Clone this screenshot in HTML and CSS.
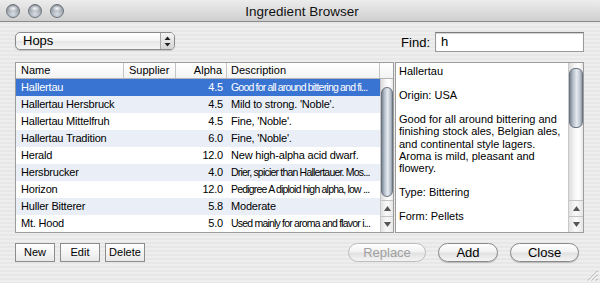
FILE: index.html
```html
<!DOCTYPE html>
<html>
<head>
<meta charset="utf-8">
<title>Ingredient Browser</title>
<link rel="stylesheet" href="styles.css">
</head>
<body>
<div class="window">
  <div class="titlebar">
    <div class="lights">
      <span class="light"></span><span class="light"></span><span class="light"></span>
    </div>
    <div class="title">Ingredient Browser</div>
  </div>
  <div class="content">
    <div class="toprow">
      <div class="popup">
        <span class="popup-label">Hops</span>
        <span class="stepper">
          <svg width="7" height="11" viewBox="0 0 7 11"><path d="M3.5 0.5 L6.5 4 L0.5 4 Z" fill="#222"/><path d="M0.5 7 L6.5 7 L3.5 10.5 Z" fill="#222"/></svg>
        </span>
      </div>
      <div class="find">
        <span class="find-label">Find:</span>
        <div class="input">h</div>
      </div>
    </div>

    <div class="main">
      <div class="table">
        <div class="thead">
          <div class="th c-name">Name</div>
          <div class="th c-sup">Supplier</div>
          <div class="th c-alpha">Alpha</div>
          <div class="th c-desc">Description</div>
          <div class="th c-corner"></div>
        </div>
        <div class="tbody">
          <div class="rows">
            <div class="row sel"><span class="c-name">Hallertau</span><span class="c-sup"></span><span class="c-alpha">4.5</span><span class="c-desc tight">Good for all around bittering and fi...</span></div>
            <div class="row alt"><span class="c-name">Hallertau Hersbruck</span><span class="c-sup"></span><span class="c-alpha">4.5</span><span class="c-desc">Mild to strong. 'Noble'.</span></div>
            <div class="row"><span class="c-name">Hallertau Mittelfruh</span><span class="c-sup"></span><span class="c-alpha">4.5</span><span class="c-desc">Fine, 'Noble'.</span></div>
            <div class="row alt"><span class="c-name">Hallertau Tradition</span><span class="c-sup"></span><span class="c-alpha">6.0</span><span class="c-desc">Fine, 'Noble'.</span></div>
            <div class="row"><span class="c-name">Herald</span><span class="c-sup"></span><span class="c-alpha">12.0</span><span class="c-desc">New high-alpha acid dwarf.</span></div>
            <div class="row alt"><span class="c-name">Hersbrucker</span><span class="c-sup"></span><span class="c-alpha">4.0</span><span class="c-desc tight">Drier, spicier than Hallertauer. Mos...</span></div>
            <div class="row"><span class="c-name">Horizon</span><span class="c-sup"></span><span class="c-alpha">12.0</span><span class="c-desc tight">Pedigree A diploid high alpha, low ...</span></div>
            <div class="row alt"><span class="c-name">Huller Bitterer</span><span class="c-sup"></span><span class="c-alpha">5.8</span><span class="c-desc">Moderate</span></div>
            <div class="row"><span class="c-name">Mt. Hood</span><span class="c-sup"></span><span class="c-alpha">5.0</span><span class="c-desc tight">Used mainly for aroma and flavor i...</span></div>
          </div>
          <div class="vscroll">
            <div class="track"><div class="thumb thumb-table"></div></div>
            <div class="arrow up"><svg width="7" height="5" viewBox="0 0 7 5"><path d="M3.5 0 L7 5 L0 5 Z" fill="#555"/></svg></div>
            <div class="arrow down"><svg width="7" height="5" viewBox="0 0 7 5"><path d="M0 0 L7 0 L3.5 5 Z" fill="#555"/></svg></div>
          </div>
        </div>
      </div>

      <div class="pane">
        <div class="pane-text">
          <p>Hallertau</p>
          <p>Origin: USA</p>
          <p>Good for all around bittering and finishing stock ales, Belgian ales, and continental style lagers. Aroma is mild, pleasant and flowery.</p>
          <p>Type: Bittering</p>
          <p>Form: Pellets</p>
        </div>
        <div class="vscroll">
          <div class="track"><div class="thumb thumb-pane"></div></div>
          <div class="arrow up"><svg width="7" height="5" viewBox="0 0 7 5"><path d="M3.5 0 L7 5 L0 5 Z" fill="#555"/></svg></div>
          <div class="arrow down"><svg width="7" height="5" viewBox="0 0 7 5"><path d="M0 0 L7 0 L3.5 5 Z" fill="#555"/></svg></div>
        </div>
      </div>
    </div>

    <div class="bottom">
      <div class="left-buttons">
        <div class="sqbtn">New</div>
        <div class="sqbtn">Edit</div>
        <div class="sqbtn">Delete</div>
      </div>
      <div class="right-buttons">
        <div class="pill disabled w-replace">Replace</div>
        <div class="pill w-add">Add</div>
        <div class="pill w-close">Close</div>
      </div>
    </div>
  </div>
  <svg class="grip" width="11" height="11" viewBox="0 0 11 11">
    <path d="M10.5 1 L1 10.5 M10.5 5 L5 10.5 M10.5 9 L9 10.5" stroke="#9a9a9a" stroke-width="1"/>
    <path d="M10.5 2 L2 10.5 M10.5 6 L6 10.5" stroke="#fff" stroke-width="1"/>
  </svg>
</div>
</body>
</html>
```

FILE: styles.css
```css
* { box-sizing: border-box; }
html, body { margin: 0; padding: 0; }
body {
  width: 600px;
  height: 283px;
  overflow: hidden;
  font-family: "Liberation Sans", Arial, sans-serif;
  color: #000;
  background: #ececec;
}
.window {
  position: relative;
  width: 600px;
  height: 283px;
  background: repeating-linear-gradient(to bottom, #eeeeee 0, #eeeeee 2px, #e7e7e7 2px, #e7e7e7 4px);
}
.titlebar {
  height: 22px;
  display: flex;
  align-items: center;
  position: relative;
  background: linear-gradient(to bottom, #ececec 0%, #dedede 50%, #cfcfcf 100%);
  border-bottom: 1px solid #8a8a8a;
  border-radius: 5px 5px 0 0;
}
.lights {
  display: flex;
  gap: 8px;
  padding-left: 6px;
}
.light {
  width: 14px;
  height: 14px;
  border-radius: 50%;
  border: 1px solid #6d737b;
  background:
    radial-gradient(ellipse 5px 3px at 50% 28%, rgba(255,255,255,0.95), rgba(255,255,255,0) 100%),
    radial-gradient(circle at 50% 75%, #d9dee4 0%, #a2a9b2 55%, #7f8790 100%);
}
.title {
  flex: 1;
  text-align: center;
  font-size: 13.5px;
  color: #111;
  margin-right: 60px;
  margin-top: 1px;
}
.content {
  padding: 10px 16px 0 15px;
}
.toprow {
  display: flex;
  justify-content: space-between;
  align-items: flex-start;
  height: 20px;
}
.popup {
  width: 160px;
  height: 18px;
  display: flex;
  align-items: center;
  border: 1px solid #8a8a8a;
  border-radius: 5px;
  background: linear-gradient(to bottom, #ffffff 0%, #f4f4f4 50%, #e6e6e6 51%, #f6f6f6 100%);
  box-shadow: 0 1px 1px rgba(0,0,0,0.15);
  overflow: hidden;
}
.popup-label {
  flex: 1;
  font-size: 13px;
  padding-left: 7px;
  line-height: 16px;
}
.stepper {
  width: 14px;
  height: 16px;
  display: flex;
  align-items: center;
  justify-content: center;
  border-left: 1px solid #a8a8a8;
  background: linear-gradient(to bottom, #f4f4f4, #d4d4d4);
}
.find {
  display: flex;
  align-items: center;
  height: 20px;
}
.find-label {
  font-size: 13px;
  margin-right: 5px;
}
.input {
  width: 149px;
  height: 20px;
  background: #fff;
  border: 1px solid #9a9a9a;
  border-top-color: #7a7a7a;
  box-shadow: inset 0 1px 1px rgba(0,0,0,0.18);
  font-size: 13px;
  line-height: 18px;
  padding-left: 5px;
}
.main {
  display: flex;
  gap: 1px;
  margin-top: 10px;
  height: 171px;
}
.table {
  width: 379px;
  height: 171px;
  border: 1px solid #9c9c9c;
  background: #fff;
  display: flex;
  flex-direction: column;
}
.thead {
  height: 16px;
  display: flex;
  border-bottom: 1px solid #b4b4b4;
  background: linear-gradient(to bottom, #ffffff, #f3f3f3);
  font-size: 11px;
}
.th {
  line-height: 15px;
  border-right: 1px solid #c4c4c4;
  padding: 0 5px;
  white-space: nowrap;
}
.th.c-corner { border-right: none; }
.c-name { width: 108px; padding-left: 5px; }
.c-sup { width: 52px; padding-left: 5px; }
.c-alpha { width: 51px; text-align: right; padding-right: 4px; }
.c-desc { width: 153px; padding-left: 4px; white-space: nowrap; overflow: hidden; }
.c-corner { width: 13px; }
.tbody {
  flex: 1;
  display: flex;
}
.rows {
  width: 364px;
  font-size: 11px;
  letter-spacing: -0.2px;
}
.row {
  height: 17px;
  display: flex;
  align-items: center;
  line-height: 17px;
  background: #fff;
}
.row.alt { background: #eaeff7; }
.row.sel { background: #3a74d3; color: #fff; }
.row span { white-space: nowrap; overflow: hidden; }
.tight { font-size: 10.5px; letter-spacing: -0.8px; }
.vscroll {
  width: 13px;
  display: flex;
  flex-direction: column;
  border-left: 1px solid #c8c8c8;
  background: linear-gradient(to right, #dcdcdc, #f6f6f6 40%, #ffffff 70%, #e8e8e8);
}
.track {
  flex: 1;
  position: relative;
}
.thumb {
  position: absolute;
  left: 0;
  right: 0;
  border-radius: 6px;
  border: 1px solid #6a7380;
  background: linear-gradient(to right, #7c8795 0%, #b4bdc9 25%, #e6eaef 55%, #c4ccd6 80%, #8e98a6 100%);
}
.thumb-table { top: 8px; height: 110px; }
.thumb-pane { top: 5px; height: 60px; }
.arrow {
  height: 16px;
  display: flex;
  align-items: center;
  justify-content: center;
  border-top: 1px solid #c4c4c4;
  background: linear-gradient(to right, #e2e2e2, #fafafa 50%, #e6e6e6);
}
.pane {
  width: 189px;
  height: 171px;
  border: 1px solid #9c9c9c;
  background: #fff;
  display: flex;
}
.pane-text {
  flex: 1;
  font-size: 11px;
  line-height: 12.1px;
  padding: 2px 4px 0 3px;
  overflow: hidden;
}
.pane-text p {
  margin: 0 0 12.1px 0;
}
.pane .vscroll {
  width: 15px;
}
.bottom {
  display: flex;
  justify-content: space-between;
  align-items: center;
  margin-top: 10px;
  padding-right: 5px;
}
.left-buttons {
  display: flex;
  gap: 5px;
}
.sqbtn {
  width: 40px;
  height: 19px;
  border: 1px solid #8c8c8c;
  background: linear-gradient(to bottom, #ffffff 0%, #f4f4f4 50%, #e8e8e8 100%);
  font-size: 11px;
  text-align: center;
  line-height: 17px;
}
.right-buttons {
  display: flex;
  gap: 12px;
}
.pill {
  height: 19px;
  border-radius: 10px;
  border: 1px solid #8a8a8a;
  background: linear-gradient(to bottom, #ffffff 0%, #f2f2f2 45%, #e2e2e2 55%, #f4f4f4 100%);
  box-shadow: 0 1px 1px rgba(0,0,0,0.2);
  font-size: 13px;
  text-align: center;
  line-height: 17px;
}
.pill.disabled {
  color: #a0a0a0;
  border-color: #bdbdbd;
  box-shadow: none;
}
.w-replace { width: 78px; }
.w-add { width: 60px; }
.w-close { width: 69px; }
.grip {
  position: absolute;
  right: 2px;
  bottom: 2px;
}
```
